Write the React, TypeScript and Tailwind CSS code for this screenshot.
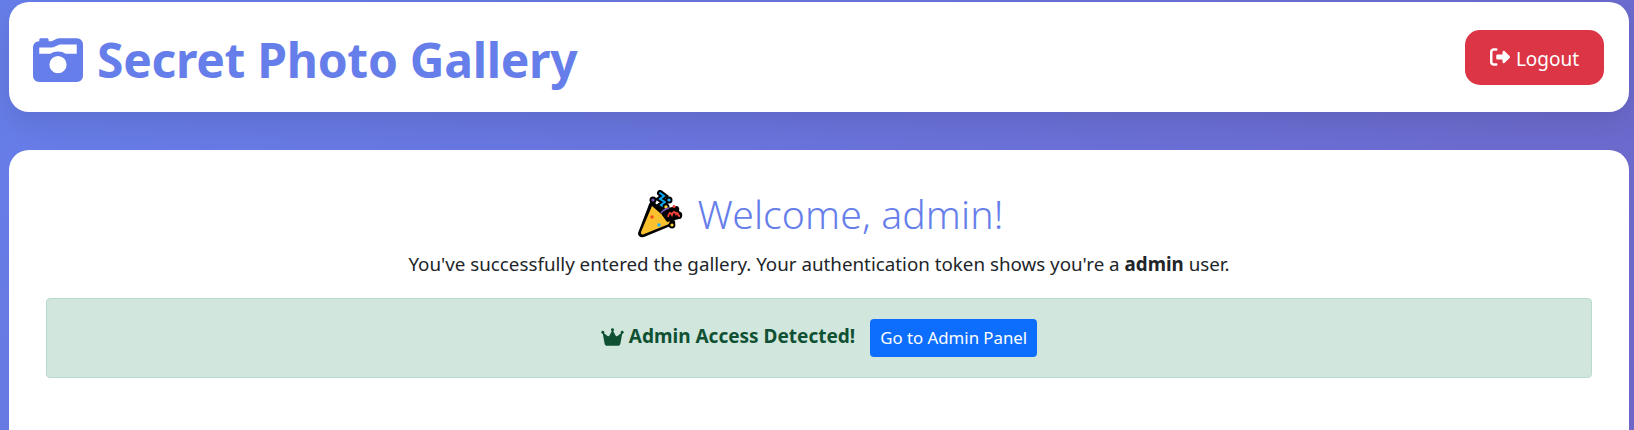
import { FaCameraRetro, FaCrown, FaRightFromBracket } from "react-icons/fa6";

function Party() {
  return (
    <svg viewBox="0 0 48 48" className="w-[48px] h-[48px] shrink-0">
      <path d="M19 12 L40 31 Q41 34 38 35 L9 47 Q3 48 3 43 L13 17 Q15 10 19 12Z" fill="#000" />
      <path d="M17 16 L36.5 33 L8 44.5 Q5.5 45 6 42Z" fill="#fbc02d" />
      <circle cx="17" cy="27" r="1.8" fill="#f4511e" />
      <circle cx="24" cy="35" r="1.8" fill="#29b6f6" />
      <path d="M25 3 l4 3 -4 3 5 3 -4 3 4 3" fill="none" stroke="#000" strokeWidth="6" strokeLinecap="round" />
      <path d="M25 3 l4 3 -4 3 5 3 -4 3 4 3" fill="none" stroke="#03a9f4" strokeWidth="2" strokeLinecap="round" />
      <circle cx="34" cy="10" r="3.5" fill="#000" />
      <circle cx="34" cy="10" r="1.6" fill="#29b6f6" />
      <circle cx="18" cy="10" r="3.5" fill="#000" />
      <circle cx="18" cy="10" r="1.6" fill="#7e57c2" />
      <circle cx="31" cy="17" r="3.5" fill="#000" />
      <circle cx="31" cy="17" r="1.7" fill="#fdd835" />
      <path d="M27 25 q3 -7 10 -8 l5 -1 q3 1 2 5 l3 2 q1 6 -3 6 l-12 3z" fill="#000" />
      <path d="M26 23 q3 -4 8 -5" fill="none" stroke="#7e57c2" strokeWidth="1.6" />
      <path d="M33 27 q1 -4 2 -4 t2 2 q1 -3 2 -3 t2 2 q1 -2 2 0 q0 2 2 2" fill="none" stroke="#f44336" strokeWidth="1.8" />
      <circle cx="39" cy="16.5" r="1.5" fill="#f44336" />
      <circle cx="37" cy="35" r="3.4" fill="#000" />
      <circle cx="37" cy="35" r="1.6" fill="#fdd835" />
    </svg>
  );
}

export default function App() {
  return (
    <div className="h-[430px] overflow-hidden bg-[linear-gradient(135deg,#667eea_0%,#764ba2_100%)] bg-[size:1634px_2800px] pl-[9px] pr-[5px] pt-[2px] font-['Noto_Sans',sans-serif] text-[#212529]">
      <nav className="h-[110px] flex items-center justify-between bg-white rounded-[20px] pl-[24px] pr-[25px] shadow-[0_10px_30px_rgba(0,0,0,0.1)]">
        <div className="mt-[5px] flex items-center gap-[14px] text-[#667eea]">
          <FaCameraRetro className="w-[50px] h-[50px]" />
          <span className="text-[48px] leading-none font-bold tracking-[-0.3px]">Secret Photo Gallery</span>
        </div>
        <button className="w-[139px] h-[55px] rounded-[15px] bg-[#dc3545] text-white text-[19px] flex items-center justify-center gap-[6px]">
          <FaRightFromBracket className="w-[20px] h-[20px]" />
          <span className="mt-[5px]">Logout</span>
        </button>
      </nav>
      <main className="mt-[38px] h-[320px] bg-white rounded-[20px] px-[37px] pt-[40px] text-center">
        <h1 className="h-[48px] flex items-center justify-center gap-[15px] text-[39.2px] leading-[48px] font-light text-[#667eea]">
          <Party />
          <span className="tracking-[0.1px]">Welcome, admin!</span>
        </h1>
        <p className="mt-[13px] text-[18.78px] leading-[27px]">
          You've successfully entered the gallery. Your authentication token shows you're a <b className="font-bold">admin</b> user.
        </p>
        <div className="mt-[20px] h-[80px] flex items-center justify-center rounded-[4px] border border-[#badbcc] bg-[#d1e7dd] text-[#0f5132]">
          <FaCrown className="w-[23px] h-[20px] mr-[5px] mb-[3px]" />
          <b className="mb-[3px] text-[19px] font-bold">Admin Access Detected!</b>
          <a className="ml-[15px] h-[38px] w-[167px] flex items-center justify-center rounded-[4px] bg-[#0d6efd] text-white text-[16.8px]">Go to Admin Panel</a>
        </div>
      </main>
    </div>
  );
}
